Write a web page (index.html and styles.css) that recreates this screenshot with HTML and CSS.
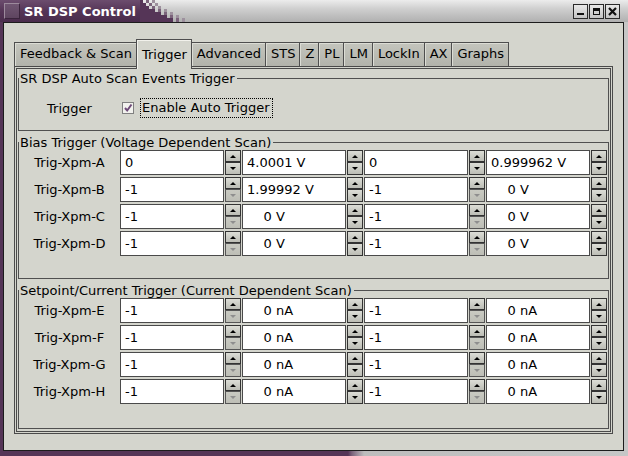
FILE: index.html
```html
<!DOCTYPE html>
<html>
<head>
<meta charset="utf-8">
<title>SR DSP Control</title>
<link rel="stylesheet" href="styles.css">
</head>
<body>
<div class="window">
  <div class="titlebar">
    <div class="tb-left">
      <span class="tb-icon"></span>
      <span class="tb-title">SR DSP Control</span>
    </div>
    <svg class="tb-dither" width="48" height="22" viewBox="0 0 48 22">
      <g fill="#553557">
        <rect x="0" y="0" width="3" height="3"/>
        <rect x="0" y="3" width="6" height="3"/>
        <rect x="0" y="6" width="9" height="3"/>
        <rect x="0" y="9" width="15" height="3"/>
        <rect x="0" y="12" width="21" height="3"/>
        <rect x="0" y="15" width="27" height="3"/>
        <rect x="0" y="18" width="33" height="4"/>
      </g>
      <g fill="#7b637b">
        <rect x="6" y="0" width="3" height="3"/>
        <rect x="9" y="3" width="3" height="3"/>
        <rect x="12" y="6" width="3" height="3"/>
        <rect x="18" y="9" width="3" height="3"/>
        <rect x="24" y="12" width="3" height="3"/>
        <rect x="30" y="15" width="3" height="3"/>
        <rect x="36" y="18" width="3" height="4"/>
      </g>
      <g fill="#9d909d">
        <rect x="12" y="0" width="3" height="3"/>
        <rect x="15" y="3" width="3" height="3"/>
        <rect x="18" y="6" width="3" height="3"/>
        <rect x="24" y="9" width="3" height="3"/>
        <rect x="30" y="12" width="3" height="3"/>
        <rect x="36" y="15" width="3" height="3"/>
        <rect x="42" y="18" width="3" height="4"/>
      </g>
    </svg>
    <div class="tb-spacer"></div>
    <div class="tb-buttons">
      <span class="tb-btn"><svg width="13" height="13" viewBox="0 0 13 13"><rect x="3" y="8" width="7" height="2" fill="#111"/></svg></span>
      <span class="tb-btn"><svg width="13" height="13" viewBox="0 0 13 13"><rect x="3" y="3" width="7" height="7" fill="#111"/><rect x="4" y="6" width="5" height="3" fill="#d0d0d0"/></svg></span>
      <span class="tb-btn"><svg width="13" height="13" viewBox="0 0 13 13"><path d="M3 3 L10 10 M10 3 L3 10" stroke="#111" stroke-width="2.2"/></svg></span>
    </div>
  </div>

  <div class="client">
    <div class="notebook">
      <div class="tabs">
        <div class="tab first">Feedback &amp; Scan</div>
        <div class="tab active">Trigger</div>
        <div class="tab">Advanced</div>
        <div class="tab">STS</div>
        <div class="tab">Z</div>
        <div class="tab">PL</div>
        <div class="tab">LM</div>
        <div class="tab">LockIn</div>
        <div class="tab">AX</div>
        <div class="tab">Graphs</div>
      </div>
      <div class="page">
        <fieldset class="frame f1">
          <legend>SR DSP Auto Scan Events Trigger</legend>
          <div class="trig-row">
            <span class="lbl">Trigger</span>
            <span class="check"><svg width="10" height="10" viewBox="0 0 10 10"><path d="M2 5 L4.2 7.5 L8.5 1.5" fill="none" stroke="#6e4a78" stroke-width="2"/></svg></span>
            <span class="check-label">Enable Auto Trigger</span>
          </div>
        </fieldset>

        <fieldset class="frame f2">
          <legend>Bias Trigger (Voltage Dependent Scan)</legend>
          <div class="grid">
            <span class="lbl">Trig-Xpm-A</span>
            <div class="cell"><span class="entry">0</span><span class="spin"><i class="up"></i><i class="dn"></i></span></div>
            <div class="cell"><span class="entry">4.0001 V</span><span class="spin"><i class="up"></i><i class="dn"></i></span></div>
            <div class="cell"><span class="entry">0</span><span class="spin"><i class="up"></i><i class="dn"></i></span></div>
            <div class="cell"><span class="entry">0.999962 V</span><span class="spin"><i class="up"></i><i class="dn"></i></span></div>

            <span class="lbl">Trig-Xpm-B</span>
            <div class="cell"><span class="entry">-1</span><span class="spin"><i class="up"></i><i class="dn off"></i></span></div>
            <div class="cell"><span class="entry">1.99992 V</span><span class="spin"><i class="up"></i><i class="dn"></i></span></div>
            <div class="cell"><span class="entry">-1</span><span class="spin"><i class="up"></i><i class="dn off"></i></span></div>
            <div class="cell"><span class="entry">    0 V</span><span class="spin"><i class="up"></i><i class="dn"></i></span></div>

            <span class="lbl">Trig-Xpm-C</span>
            <div class="cell"><span class="entry">-1</span><span class="spin"><i class="up"></i><i class="dn off"></i></span></div>
            <div class="cell"><span class="entry">    0 V</span><span class="spin"><i class="up"></i><i class="dn"></i></span></div>
            <div class="cell"><span class="entry">-1</span><span class="spin"><i class="up"></i><i class="dn off"></i></span></div>
            <div class="cell"><span class="entry">    0 V</span><span class="spin"><i class="up"></i><i class="dn"></i></span></div>

            <span class="lbl">Trig-Xpm-D</span>
            <div class="cell"><span class="entry">-1</span><span class="spin"><i class="up"></i><i class="dn off"></i></span></div>
            <div class="cell"><span class="entry">    0 V</span><span class="spin"><i class="up"></i><i class="dn"></i></span></div>
            <div class="cell"><span class="entry">-1</span><span class="spin"><i class="up"></i><i class="dn off"></i></span></div>
            <div class="cell"><span class="entry">    0 V</span><span class="spin"><i class="up"></i><i class="dn"></i></span></div>
          </div>
        </fieldset>

        <fieldset class="frame f3">
          <legend>Setpoint/Current Trigger (Current Dependent Scan)</legend>
          <div class="grid">
            <span class="lbl">Trig-Xpm-E</span>
            <div class="cell"><span class="entry">-1</span><span class="spin"><i class="up"></i><i class="dn off"></i></span></div>
            <div class="cell"><span class="entry">    0 nA</span><span class="spin"><i class="up"></i><i class="dn"></i></span></div>
            <div class="cell"><span class="entry">-1</span><span class="spin"><i class="up"></i><i class="dn off"></i></span></div>
            <div class="cell"><span class="entry">    0 nA</span><span class="spin"><i class="up"></i><i class="dn"></i></span></div>

            <span class="lbl">Trig-Xpm-F</span>
            <div class="cell"><span class="entry">-1</span><span class="spin"><i class="up"></i><i class="dn off"></i></span></div>
            <div class="cell"><span class="entry">    0 nA</span><span class="spin"><i class="up"></i><i class="dn"></i></span></div>
            <div class="cell"><span class="entry">-1</span><span class="spin"><i class="up"></i><i class="dn off"></i></span></div>
            <div class="cell"><span class="entry">    0 nA</span><span class="spin"><i class="up"></i><i class="dn"></i></span></div>

            <span class="lbl">Trig-Xpm-G</span>
            <div class="cell"><span class="entry">-1</span><span class="spin"><i class="up"></i><i class="dn off"></i></span></div>
            <div class="cell"><span class="entry">    0 nA</span><span class="spin"><i class="up"></i><i class="dn"></i></span></div>
            <div class="cell"><span class="entry">-1</span><span class="spin"><i class="up"></i><i class="dn off"></i></span></div>
            <div class="cell"><span class="entry">    0 nA</span><span class="spin"><i class="up"></i><i class="dn"></i></span></div>

            <span class="lbl">Trig-Xpm-H</span>
            <div class="cell"><span class="entry">-1</span><span class="spin"><i class="up"></i><i class="dn off"></i></span></div>
            <div class="cell"><span class="entry">    0 nA</span><span class="spin"><i class="up"></i><i class="dn"></i></span></div>
            <div class="cell"><span class="entry">-1</span><span class="spin"><i class="up"></i><i class="dn off"></i></span></div>
            <div class="cell"><span class="entry">    0 nA</span><span class="spin"><i class="up"></i><i class="dn"></i></span></div>
          </div>
        </fieldset>
      </div>
    </div>
  </div>
</div>
</body>
</html>
```

FILE: styles.css
```css
html, body {
  margin: 0;
  padding: 0;
}
body {
  width: 628px;
  height: 456px;
  overflow: hidden;
  font-family: "DejaVu Sans", "Bitstream Vera Sans", sans-serif;
  font-size: 13px;
  color: #000;
}

.window {
  width: 628px;
  height: 456px;
  display: flex;
  flex-direction: column;
  background: linear-gradient(to right, #553557 0, #553557 348px, #7b637b 352px, #9d909d 358px, #bdbdbd 364px, #c6c6c6 100%);
}

/* ---------- title bar ---------- */
.titlebar {
  height: 22px;
  flex: none;
  display: flex;
  align-items: stretch;
  background: linear-gradient(#ececec, #cfcfcf 40%, #b0b0b0);
}
.tb-left {
  width: 136px;
  padding-left: 4px;
  display: flex;
  align-items: center;
  gap: 4px;
  background: linear-gradient(#6c4d6e, #553557 50%, #4a2c4c);
}
.tb-icon {
  width: 16px;
  height: 16px;
  box-sizing: border-box;
  border: 1px solid #9c8a9c;
  border-right-color: #3a243c;
  border-bottom-color: #3a243c;
  background: linear-gradient(#705672, #5e4560);
}
.tb-title {
  color: #fff;
  font-weight: bold;
  font-size: 13px;
  white-space: nowrap;
}
.tb-dither {
  display: block;
  flex: none;
}
.tb-spacer {
  flex: 1;
}
.tb-buttons {
  display: flex;
  gap: 1px;
  padding: 4px 8px 0 0;
}
.tb-btn {
  width: 15px;
  height: 15px;
  box-sizing: border-box;
  border: 1px solid #2a2a2a;
  background: linear-gradient(#e8e8e8, #c4c4c4);
  display: flex;
  align-items: center;
  justify-content: center;
}
.tb-btn svg {
  display: block;
}

/* ---------- client area ---------- */
.client {
  flex: 1;
  margin: 0 4px 5px 3px;
  border: 1px solid #1c1c1c;
  background: #d4d5cd;
  padding: 16px 10px;
  display: flex;
  flex-direction: column;
}
.notebook {
  flex: 1;
  display: flex;
  flex-direction: column;
}
.tabs {
  height: 27px;
  flex: none;
  display: flex;
  align-items: flex-end;
}
.tab {
  height: 24px;
  box-sizing: border-box;
  padding: 0 4px 0 5px;
  line-height: 22px;
  border: 1px solid #4e4e4e;
  border-bottom: none;
  margin-left: -1px;
  background: linear-gradient(#c4c5bd, #b2b3ab);
  box-shadow: inset 1px 1px 0 #dcddd5;
  white-space: nowrap;
}
.tab.first {
  margin-left: 0;
}
.tab.active {
  height: 30px;
  margin-bottom: -3px;
  padding-top: 4px;
  position: relative;
  z-index: 1;
  background: #d4d5cd;
  box-shadow: inset 1px 1px 0 #f2f2ec;
}
.page {
  flex: 1;
  border: 3px double #4a4a4a;
  padding: 2px 1px;
  display: flex;
  flex-direction: column;
  gap: 4px;
}

/* ---------- frames ---------- */
.frame {
  margin: 0;
  padding: 0;
  border: 1px solid #505050;
  min-width: 0;
}
.frame legend {
  padding: 0 2px 0 1px;
  margin: 0;
  line-height: 15px;
  font-size: 13px;
  white-space: nowrap;
}
.f1 {
  padding: 10px 0 10px 0;
}
.f2 {
  padding-bottom: 22px;
}
.f3 {
  flex: 1;
  padding-bottom: 24px;
}

.trig-row {
  height: 24px;
  display: flex;
  align-items: center;
}
.trig-row .lbl {
  width: 101px;
  text-align: center;
}
.check {
  width: 12px;
  height: 12px;
  margin-left: 2px;
  box-sizing: border-box;
  border: 1px solid #808080;
  background: #f2f2ee;
  display: flex;
  align-items: center;
  justify-content: center;
}
.check svg {
  display: block;
}
.check-label {
  margin-left: 6px;
  height: 20px;
  box-sizing: border-box;
  line-height: 18px;
  padding: 0 2px 0 1px;
  border: 1px dotted #000;
}

/* ---------- spin grid ---------- */
.grid {
  display: grid;
  grid-template-columns: 101px repeat(4, 122px);
  grid-auto-rows: 25px;
  row-gap: 2px;
}
.grid .lbl {
  display: flex;
  align-items: center;
  justify-content: center;
  white-space: nowrap;
}
.cell {
  display: flex;
  gap: 1px;
}
.entry {
  width: 104px;
  height: 25px;
  box-sizing: border-box;
  border: 1px solid #4a4a4a;
  background: #fff;
  padding-left: 4px;
  line-height: 23px;
  white-space: pre;
  overflow: hidden;
}
.spin {
  width: 16px;
  height: 25px;
  display: flex;
  flex-direction: column;
}
.spin i {
  display: flex;
  align-items: center;
  justify-content: center;
  box-sizing: border-box;
  border: 1px solid #333;
  background: linear-gradient(#dcddd6, #bcbdb5);
}
.spin .up {
  height: 12px;
}
.spin .dn {
  height: 13px;
}
.spin .up::before {
  content: "";
  border-left: 3px solid transparent;
  border-right: 3px solid transparent;
  border-bottom: 3px solid #000;
}
.spin .dn::before {
  content: "";
  border-left: 3px solid transparent;
  border-right: 3px solid transparent;
  border-top: 3px solid #000;
}
.spin .dn.off {
  border-color: #555;
  background: linear-gradient(#c9cac2, #bdbeb6);
}
.spin .dn.off::before {
  border-top-color: #8e8e8e;
}
```
